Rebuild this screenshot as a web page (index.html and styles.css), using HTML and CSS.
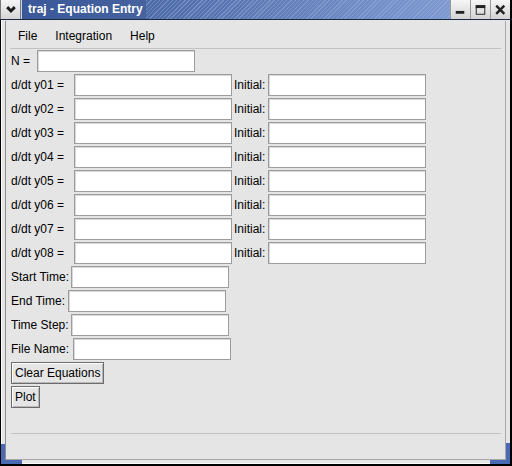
FILE: index.html
```html
<!DOCTYPE html>
<html>
<head>
<meta charset="utf-8">
<title>traj - Equation Entry</title>
<link rel="stylesheet" href="styles.css">
</head>
<body>
<div class="window">
  <div class="titlebar">
    <div class="tb-btn tb-menu">
      <svg width="20" height="19" viewBox="0 0 20 19"><polyline points="6.5,7 10.5,11 14.5,7" fill="none" stroke="#1a1a1a" stroke-width="3"/></svg>
    </div>
    <div class="tb-title"><span class="tb-text">traj - Equation Entry</span></div>
    <div class="tb-btn">
      <svg width="20" height="19" viewBox="0 0 20 19"><rect x="5" y="11" width="9" height="3" fill="#222"/></svg>
    </div>
    <div class="tb-btn">
      <svg width="20" height="19" viewBox="0 0 20 19"><rect x="5.5" y="5.5" width="9" height="9" fill="none" stroke="#222" stroke-width="1"/><rect x="5" y="5" width="10" height="3" fill="#222"/></svg>
    </div>
    <div class="tb-btn">
      <svg width="20" height="19" viewBox="0 0 20 19"><path d="M5.5 5.5 L14 14 M14 5.5 L5.5 14" stroke="#222" stroke-width="2.6"/></svg>
    </div>
  </div>
  <div class="frame">
    <div class="client">
      <div class="menubar">
        <span class="menu-item">File</span>
        <span class="menu-item">Integration</span>
        <span class="menu-item">Help</span>
      </div>
      <div class="sep"></div>
      <div class="form">
        <div class="row"><span class="lbl w-n">N =</span><input class="field" type="text"></div>
        <div class="row"><span class="lbl w-eq">d/dt y01 =</span><input class="field" type="text"><span class="lbl w-init">Initial:</span><input class="field" type="text"></div>
        <div class="row"><span class="lbl w-eq">d/dt y02 =</span><input class="field" type="text"><span class="lbl w-init">Initial:</span><input class="field" type="text"></div>
        <div class="row"><span class="lbl w-eq">d/dt y03 =</span><input class="field" type="text"><span class="lbl w-init">Initial:</span><input class="field" type="text"></div>
        <div class="row"><span class="lbl w-eq">d/dt y04 =</span><input class="field" type="text"><span class="lbl w-init">Initial:</span><input class="field" type="text"></div>
        <div class="row"><span class="lbl w-eq">d/dt y05 =</span><input class="field" type="text"><span class="lbl w-init">Initial:</span><input class="field" type="text"></div>
        <div class="row"><span class="lbl w-eq">d/dt y06 =</span><input class="field" type="text"><span class="lbl w-init">Initial:</span><input class="field" type="text"></div>
        <div class="row"><span class="lbl w-eq">d/dt y07 =</span><input class="field" type="text"><span class="lbl w-init">Initial:</span><input class="field" type="text"></div>
        <div class="row"><span class="lbl w-eq">d/dt y08 =</span><input class="field" type="text"><span class="lbl w-init">Initial:</span><input class="field" type="text"></div>
        <div class="row"><span class="lbl w-start">Start Time:</span><input class="field" type="text"></div>
        <div class="row"><span class="lbl w-end">End Time:</span><input class="field" type="text"></div>
        <div class="row"><span class="lbl w-step">Time Step:</span><input class="field" type="text"></div>
        <div class="row"><span class="lbl w-file">File Name:</span><input class="field" type="text"></div>
        <div class="row"><button class="btn">Clear Equations</button></div>
        <div class="row"><button class="btn">Plot</button></div>
      </div>
      <div class="sep sep-bottom"></div>
      <div class="status"></div>
    </div>
    <div class="corner corner-left"></div>
    <div class="corner corner-right"></div>
  </div>
</div>
</body>
</html>
```

FILE: styles.css
```css
* { box-sizing: border-box; }
html, body { margin: 0; padding: 0; background: #e5e5e5; }
body { font-family: "Liberation Sans", Arial, sans-serif; font-size: 12px; color: #000; }

.window {
  width: 512px;
  height: 466px;
  display: flex;
  flex-direction: column;
  background: #e5e5e5;
}

.titlebar {
  height: 20px;
  display: flex;
  border-bottom: 1px solid #1c2740;
  background: #e5e5e5;
}
.tb-btn {
  width: 20px;
  height: 19px;
  flex: none;
  background: linear-gradient(#f6f6f6, #d4d4d4);
  border-left: 1px solid #9a9a9a;
  display: flex;
  align-items: center;
  justify-content: center;
}
.tb-btn svg { display: block; }
.tb-menu {
  width: 21px;
  border-left: 1px solid #7a7a7a;
  border-right: 1px solid #7a7a7a;
}
.tb-btn:last-child { border-right: 2px solid #000; width: 22px; }
.tb-title {
  flex: 1;
  height: 19px;
  display: flex;
  align-items: center;
  background:
    repeating-linear-gradient(-45deg, rgba(255,255,255,0) 0 2px, rgba(170,190,230,0.35) 2px 3px),
    linear-gradient(to right, #3a5898, #7e99d0);
  border-left: 1px solid #c8d2ea;
}
.tb-text {
  color: #fff;
  font-weight: bold;
  font-size: 12px;
  padding: 0 3px 0 6px;
  line-height: 19px;
  background: linear-gradient(to right, #3a5898, #46639f);
}

.frame {
  flex: 1;
  position: relative;
  border-left: 1px solid #000;
  border-right: 2px solid #000;
  border-bottom: 2px solid #000;
  padding: 1px 4px 4px 4px;
  box-shadow: inset 1px 0 0 #fafafa, inset 0 -1px 0 #fafafa;
  display: flex;
}
.client {
  flex: 1;
  display: flex;
  flex-direction: column;
  border-left: 1px solid #8e8e8e;
  border-right: 1px solid #a8a8a8;
  border-bottom: 1px solid #a8a8a8;
  background: #e5e5e5;
}

.menubar {
  height: 27px;
  display: flex;
  align-items: center;
  gap: 2px;
  padding: 2px 4px 0 4px;
}
.menu-item { padding: 0 8px; }

.sep {
  height: 1px;
  margin: 0 4px;
  background: #c2c2c2;
  flex: none;
}
.sep-bottom { margin: auto 4px 0 5px; }
.status { height: 25px; flex: none; }

.form {
  display: flex;
  flex-direction: column;
  gap: 2px;
  padding: 1px 0 0 5px;
}
.row {
  height: 22px;
  display: flex;
  align-items: center;
}
.lbl { white-space: nowrap; flex: none; }
.w-n { width: 26px; }
.w-eq { width: 63px; }
.w-init { width: 36px; padding-left: 2px; }
.w-start { width: 60px; }
.w-end { width: 57px; }
.w-step { width: 60px; }
.w-file { width: 62px; }

.field {
  width: 158px;
  height: 22px;
  margin: 0;
  padding: 0 3px;
  border: 1px solid #9c9c9c;
  background: #fff;
  box-shadow: inset 1px 1px 0 #d8d8d8;
  font: inherit;
  outline: none;
  -webkit-appearance: none;
  appearance: none;
  border-radius: 0;
  flex: none;
}

.btn {
  height: 22px;
  margin: 0;
  padding: 0 3px;
  border: 1px solid #6c6c6c;
  background: #e5e5e5;
  box-shadow: inset 1px 1px 0 #ffffff, inset -1px -1px 0 #b8b8b8;
  font: inherit;
  color: #000;
  border-radius: 0;
  -webkit-appearance: none;
  appearance: none;
}

.corner {
  position: absolute;
  bottom: 0;
  border-bottom: 4px solid #4a6ab3;
}
.corner-left {
  left: 0;
  width: 21px;
  height: 20px;
  border-left: 4px solid #4a6ab3;
}
.corner-right {
  right: 0;
  width: 20px;
  height: 21px;
  border-right: 4px solid #4a6ab3;
}
```
